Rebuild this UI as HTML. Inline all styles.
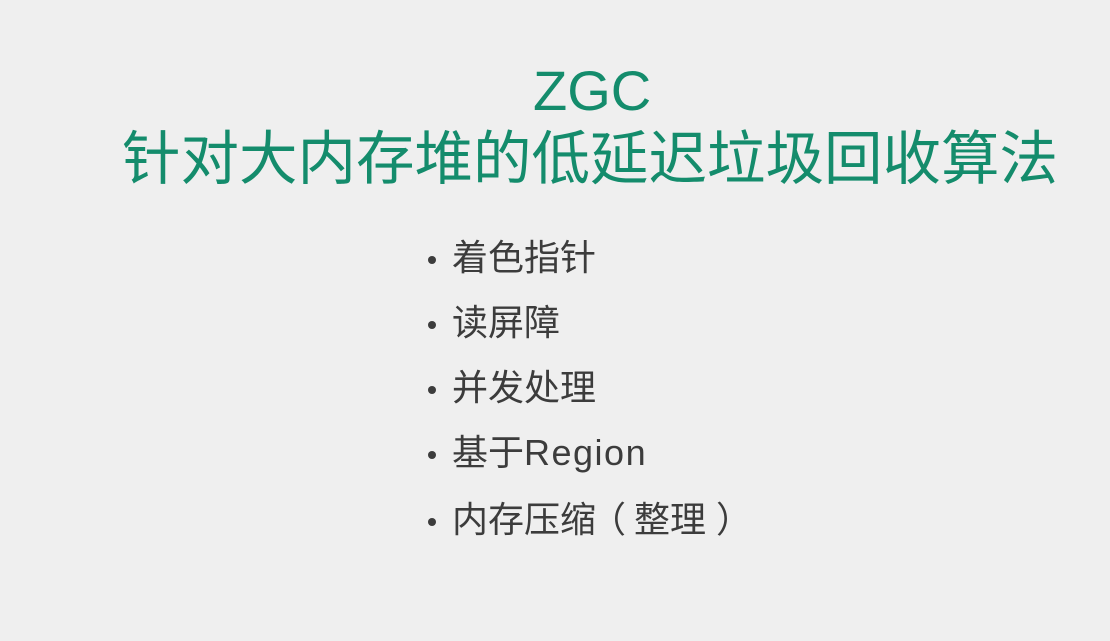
<!DOCTYPE html>
<html><head><meta charset="utf-8"><style>
html,body{margin:0;padding:0;width:1110px;height:641px;overflow:hidden;background:#efefef;}
.t{position:absolute;color:#148c6c;font-family:"Liberation Sans","Noto Sans CJK SC",sans-serif;white-space:nowrap;line-height:1;}
#z{left:533px;top:63px;font-size:56px;}
#s{left:122px;top:131px;font-size:58.5px;}
.b{position:absolute;left:452px;font-family:"Liberation Sans","Noto Sans CJK SC",sans-serif;font-size:36px;color:#3c3c3c;line-height:1;white-space:nowrap;}
.b:before{content:"";position:absolute;left:-24px;top:16px;width:8px;height:8px;border-radius:50%;background:#3c3c3c;}
.r{letter-spacing:1.5px;}
</style></head><body>
<div class="t" id="z">ZGC</div>
<div class="t" id="s">针对大内存堆的低延迟垃圾回收算法</div>
<div class="b" style="top:240px">着色指针</div>
<div class="b" style="top:305px">读屏障</div>
<div class="b" style="top:370px">并发处理</div>
<div class="b" style="top:435px">基于<span class="r">Region</span></div>
<div class="b" style="top:502px">内存压缩<span style="margin-left:-6px;margin-right:8px">（</span>整理<span style="margin-left:10px">）</span></div>
</body></html>
